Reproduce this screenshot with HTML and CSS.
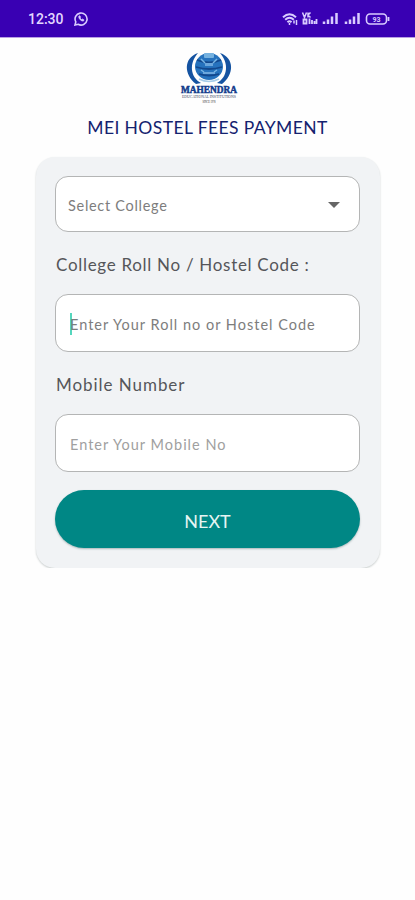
FILE: index.html
```html
<!DOCTYPE html>
<html lang="en">
<head>
<meta charset="utf-8">
<title>MEI Hostel Fees Payment</title>
<link rel="stylesheet" href="styles.css">
</head>
<body>
<header class="status">
  <span class="clock">12:30</span>
  <svg class="chat" width="14" height="14" viewBox="0 0 14 14" fill="none" stroke="#d9ccff" stroke-width="1.6"><path d="M1 13l.8-3.100A6 6 0 1 1 4.200 12.300Z"/><path d="M4.800 4.200c-.5 2.200 2.500 5.400 4.800 4.800l.3-1.200-1.600-.8-.8.6-1.500-1.600.6-.8-.7-1.500z" fill="#d9ccff" stroke-width=".7"/></svg>
  <svg class="indicators" width="108" height="16" viewBox="0 0 108 16" fill="none" stroke="#d9ccff">
    <path d="M1 6.200Q7.500.2 14 6.200M3.200 8.700Q7.500 4.700 11.800 8.700M5.500 11.200Q7.500 9.200 9.500 11.200" stroke-width="2"/>
    <path d="M7.500 12v2M12 9.500v3M14.500 9v5" stroke-width="1.500"/>
    <path d="M20.500 1.500l2 5 2-5M26 1.500v5M26 4l2.500-2.500M26 4l2.500 2.500" stroke-width="1.500"/>
    <path d="M21.500 8.500h3v4h-3zM27.500 7.500v5.500M30 9v4M32.500 10v3M34.500 8v5" stroke-width="1.800"/>
    <path d="M42 10.500V13M46 8.500V13M50 5.500V13M54.500 2V13M64 10.500V13M68 8.500V13M72 5.500V13M76.500 2V13" stroke-width="2.500"/>
    <rect x="84.500" y="3" width="20" height="10" rx="3.500" stroke-width="1.600"/>
    <path d="M106.500 6v4" stroke-width="1.800"/>
    <text x="94.500" y="10.500" class="charge">93</text>
  </svg>
</header>
<main>
  <svg class="logo" width="60" height="54" viewBox="0 0 60 54">
    <path d="M17 3C2 8 3 25 15 34l5-1C9 27 8 13 17 3ZM39 3c15 5 14 22 2 31l-5-1C47 27 48 13 39 3Z" fill="#1553a1"/>
    <ellipse cx="28" cy="16.500" rx="14" ry="13.500" fill="#2672bd"/>
    <path d="M16 10Q28 15 40 10M15 17Q28 21 41 17M18 24Q28 27 38 24" fill="none" stroke="#12478c" stroke-width="1.800"/>
    <path d="M20 9l4 4M36 9l-4 4M20 20l3 2M36 20l-3 2" stroke="#79b6e5" stroke-width="1.500"/>
    <rect x="23" y="3" width="10" height="5" rx="1" fill="#75b1df"/>
    <path d="M24 13h8v3h-8zM22 22h12v2H22z" fill="#6ba6dc"/>
    <path d="M18 29Q28 34 38 29" fill="none" stroke="#a7cce8" stroke-width="1.500"/>
    <text x="28" y="42.500" class="logo-name" textLength="56" lengthAdjust="spacingAndGlyphs">MAHENDRA</text>
    <text x="28" y="48" class="logo-sub" textLength="54" lengthAdjust="spacingAndGlyphs">EDUCATIONAL INSTITUTIONS</text>
    <text x="28" y="52.500" class="logo-since" textLength="13" lengthAdjust="spacingAndGlyphs">SINCE 1978</text>
  </svg>
  <h1>MEI HOSTEL FEES PAYMENT</h1>
  <form class="card">
    <div class="field select"><span class="hint college">Select College</span><svg width="12" height="6" viewBox="0 0 12 6"><path d="M0 0h12L6 6z" fill="#666"/></svg></div>
    <div class="label roll"><span>College Roll No / Hostel Code :</span></div>
    <div class="field focused"><span class="hint code">Enter Your Roll no or Hostel Code</span></div>
    <div class="label phone"><span>Mobile Number</span></div>
    <div class="field"><span class="hint mobile">Enter Your Mobile No</span></div>
    <button type="button">NEXT</button>
  </form>
</main>
</body>
</html>
```
FILE: styles.css
```css
* { box-sizing: border-box; }
body { margin: 0; background: #fefefe; font-family: Lato, "Liberation Sans", sans-serif; color: #55565a; }
.status { height: 38px; display: flex; align-items: center; padding: 0 25px 0 28px; background: #3900b3; border-bottom: 1px solid #b9a0e3; }
.clock { color: #e3d8ff; font: 500 14px/16px Roboto, sans-serif; }
.chat { margin-left: 10px; }
.indicators { margin-left: auto; }
.charge { font: 700 7px Roboto, sans-serif; text-anchor: middle; fill: #d9ccff; stroke: none; }
main { display: flex; flex-direction: column; align-items: center; padding-top: 12px; }
.logo { margin-left: 6px; overflow: visible; }
.logo text { text-anchor: middle; }
.logo-name { font: 900 10px "Liberation Serif", serif; fill: #123b8b; stroke: #123b8b; stroke-width: .5px; }
.logo-sub { font: 3.500px "Liberation Serif", serif; fill: #33415c; }
.logo-since { font: 3px "Liberation Serif", serif; fill: #222; }
h1 { margin: 14px 0 0; height: 20px; font-size: 17.500px; line-height: 20px; font-weight: 400; letter-spacing: .4px; color: #14226f; white-space: nowrap; }
.card { width: 344px; height: 411px; margin: 19px 0 0 1px; padding: 19px 20px 0 19px; background: #f1f3f5; border-radius: 19px; box-shadow: 0 1px 2px #c9cecd; }
.field { height: 58px; border: 1px solid #b4b5b5; border-radius: 13px; background: #fff; display: flex; align-items: center; padding: 2px 13px 0 14px; }
.select { height: 56px; padding: 2px 19px 0 12px; justify-content: space-between; }
.hint { font-size: 14.500px; letter-spacing: 1px; white-space: nowrap; color: #7d7d7d; }
.college { letter-spacing: .7px; }
.mobile { color: #a0a0a0; }
.label { height: 62px; padding: 2px 0 0 1px; font-size: 17px; line-height: 62px; letter-spacing: .7px; white-space: nowrap; }
.phone { letter-spacing: .95px; }
.focused::before { content: ""; width: 2px; height: 22px; background: #55d6bd; margin-right: -2px; }
button { display: block; width: 305px; height: 58px; margin-top: 18px; padding: 3px 0 0; border: 0; border-radius: 29px; background: #008785; color: #e6f5f3; font: 18px Lato, sans-serif; box-shadow: 0 1px 2px #a9b8b9; }
```
